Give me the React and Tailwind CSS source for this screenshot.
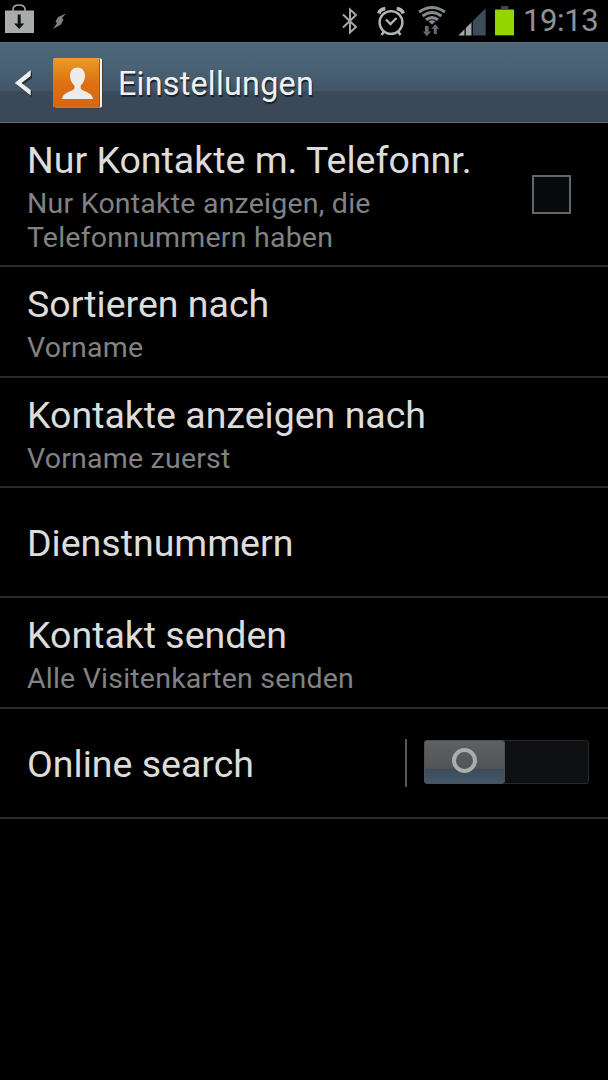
import React, { useState } from "react";

const settings = [
  {
    id: "phoneOnly",
    title: "Nur Kontakte m. Telefonnr.",
    summary: "Nur Kontakte anzeigen, die Telefonnummern haben",
    height: "h-36",
    control: "checkbox",
  },
  { id: "sort", title: "Sortieren nach", summary: "Vorname", height: "h-[111px]" },
  { id: "display", title: "Kontakte anzeigen nach", summary: "Vorname zuerst", height: "h-[110px]" },
  { id: "service", title: "Dienstnummern", height: "h-[110px]" },
  { id: "send", title: "Kontakt senden", summary: "Alle Visitenkarten senden", height: "h-[111px]" },
  { id: "online", title: "Online search", height: "h-[110px]", control: "switch" },
];

function StatusBar() {
  return (
    <div className="flex h-[42px] justify-between bg-black">
      <svg className="h-[42px] w-20" viewBox="0 0 80 42">
        <path d="M13 11 V9.5 Q13 5 19 5 Q25 5 25 9.5 V11" fill="none" stroke="#a3a6a6" strokeWidth="1.6" />
        <path d="M5 10.5 H34 V33 H5 Z" fill="#a9acab" />
        <path d="M17.7 14.5 H20.7 V23.5 H24.3 L19.2 29 L14 23.5 H17.7 Z" fill="#111" />
        <path d="M66 13.5 L58 17 L55.5 21.5 L57 23 L53 29 L61 24.5 L63.5 19.5 L62 18 Z" fill="#7a8084" />
      </svg>
      <div className="flex">
        <svg className="h-[42px] w-[185px]" viewBox="330 0 185 42">
          {/* bluetooth */}
          <path d="M343 14.5 L356 27 L350 32.5 V9.5 L356 15 L343 27.5" fill="none" stroke="#a3a7a8" strokeWidth="2" />
          {/* alarm */}
          <g fill="none" stroke="#b3b6b6">
            <circle cx="391" cy="22.5" r="11.4" strokeWidth="2.4" />
            <path d="M386 19.5 L390.5 24 L396.5 18" strokeWidth="2.3" />
            <path d="M384 31.5 L381.5 35 M398 31.5 L400.5 35" strokeWidth="2.4" />
            <path d="M378.8 13.5 Q380 9.2 385.3 8.5 M403.2 13.5 Q402 9.2 396.7 8.5" strokeWidth="3.6" />
          </g>
          {/* wifi */}
          <g fill="none" stroke="#858a8d" strokeWidth="3">
            <path d="M419.2 12 Q432 3 444.8 12" />
            <path d="M422.6 16 Q432 9 441.4 16" />
            <path d="M426 19.8 Q432 15.4 438 19.8" />
          </g>
          <path d="M428.5 21.5 Q432 19 435.5 21.5 L432 24.4 Z" fill="#858a8d" />
          <path d="M425 26 H428.6 V31.5 H431 L426.8 36.2 L422.8 31.5 H425 Z M433.8 34 V28.8 H431.3 L435.3 24.2 L439.3 28.8 H436.8 V34 Z" fill="#626b72" />
          {/* signal */}
          <path d="M458.3 35.5 L464.5 29.3 V35.5 Z M465.8 28 L471.5 22.3 V35.5 H465.8 Z" fill="#a2a5a6" />
          <path d="M472.8 21 L485.7 8.2 V35.5 H472.8 Z" fill="#3d4c58" />
          {/* battery */}
          <path d="M501 6 H508.5 V9 H501 Z" fill="#3a4650" />
          <path d="M495 9.5 H514 V35.3 H495 Z" fill="#94d500" />
        </svg>
        <span className="w-[93px] pl-[8px] text-[31px] leading-[42px] tracking-[-0.4px] text-[#8f9396]">19:13</span>
      </div>
    </div>
  );
}

function Header() {
  return (
    <header className="flex h-[81px] items-center border-t border-b border-t-[#5c7281] border-b-[#5b6974] bg-[linear-gradient(180deg,#4d6678_0%,#4a6275_30%,#415567_60%,#3b4a5a_62%,#394756_100%)]">
      <svg className="h-20 w-[110px]" viewBox="0 42 110 80">
        <path d="M32 71 V77 L22.5 83.5 L32 90.5 V96 L16 83.5 Z" fill="#1d2730" />
        <path d="M30.7 69 V75 L21.5 82 L30.7 89 V94.5 L14.8 82 Z" fill="#eee" />
        <defs>
          <linearGradient id="book" x1="0" y1="0" x2="0" y2="1">
            <stop offset="0" stopColor="#eb9b2b" />
            <stop offset="0.5" stopColor="#dd7113" />
            <stop offset="1" stopColor="#d96510" />
          </linearGradient>
        </defs>
        <rect x="54" y="58.5" width="49" height="49" rx="1.5" fill="#353d45" />
        <rect x="55" y="57.5" width="47" height="49" rx="1.5" fill="#f3f3f3" />
        <rect x="98.5" y="58" width="1.5" height="48" fill="#9a5a23" />
        <rect x="53" y="57" width="46" height="49.5" rx="1.5" fill="url(#book)" />
        <path d="M77.5 66.5 C82.5 66.5 85.3 70.5 85 75.5 C84.8 80 82.5 82.5 80.7 84.5 V87.5 C82 90.5 92.5 91 93 98 H62 C62.5 91 73 90.5 74.5 87.5 V84.5 C72.5 82.5 70.3 80 70 75.5 C69.7 70.5 72.5 66.5 77.5 66.5 Z" fill="#ececec" />
      </svg>
      <h1 className="pl-[8px] pt-[3px] text-[32.4px] leading-[48px] tracking-[0.2px] text-[#f0f0f0] [text-shadow:1px_2px_1px_#1a222a]">Einstellungen</h1>
    </header>
  );
}

function Switch({ on, onClick }) {
  return (
    <div className="flex items-center">
      <div className="mr-[17px] h-12 w-[2px] bg-[#55585b]" />
      <button
        onClick={onClick}
        className={`mr-[19px] mb-[3px] flex h-11 w-[165px] rounded-[3px] border border-[#25272a] bg-[#0f1012] ${on ? "justify-end" : "justify-start"}`}
      >
        <span className="-my-px -ml-px flex h-11 w-[81px] items-center justify-center rounded-[3px] border border-[#4a5157] bg-[linear-gradient(180deg,#5f6062_0%,#535455_65%,#3b4b5a_67%,#44576a_100%)]">
          <span className="mb-[3px] h-[25px] w-[25px] rounded-full border-4 border-[#adadad]" />
        </span>
      </button>
    </div>
  );
}

export default function App() {
  const [phoneOnly, setPhoneOnly] = useState(false);
  const [online, setOnline] = useState(false);

  return (
    <div className="min-h-[1080px] w-[608px] bg-black font-['Roboto',sans-serif]">
      <StatusBar />
      <Header />
      <main>
        {settings.map((item) => (
          <div key={item.id} className={`flex items-center justify-between border-b-2 border-[#2b2b2b] pl-[27px] ${item.height}`}>
            <div className={item.summary ? "pt-1" : "pt-[2px]"}>
              <h2 className="whitespace-nowrap text-[37.5px] leading-[44px] text-[#dcdcdc]">{item.title}</h2>
              {item.summary && (
                <p className="mt-[5px] w-[400px] text-[28.5px] leading-[33.6px] tracking-[0.22px] text-[#808284]">{item.summary}</p>
              )}
            </div>
            {item.control === "checkbox" && (
              <button
                onClick={() => setPhoneOnly(!phoneOnly)}
                className="mr-[37px] h-[39px] w-[39px] border-2 border-[#62666b] bg-[#090a0b] text-2xl leading-none text-lime-500"
              >
                {phoneOnly ? "✓" : ""}
              </button>
            )}
            {item.control === "switch" && <Switch on={online} onClick={() => setOnline(!online)} />}
          </div>
        ))}
      </main>
    </div>
  );
}
